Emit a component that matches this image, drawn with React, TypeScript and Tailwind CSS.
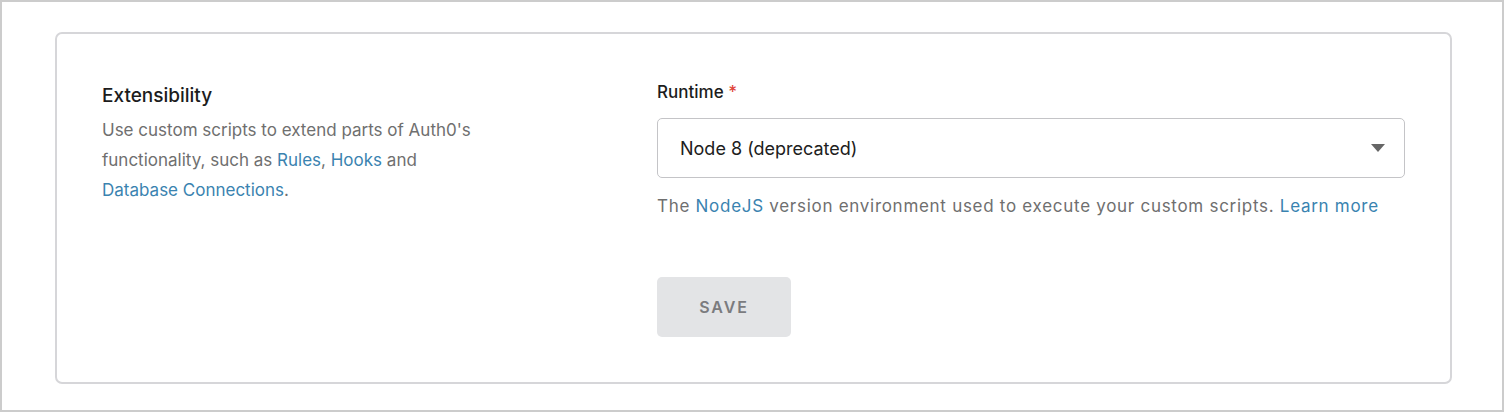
import React from "react";

const font = { fontFamily: "Inter, 'Noto Sans', sans-serif" };

export default function App() {
  return (
    <div
      className="w-[1504px] h-[412px] border-2 border-[#cccccc] bg-white pt-[30px] pl-[53px]"
      style={font}
    >
      <div className="w-[1397px] h-[352px] rounded-[7px] border-2 border-[#d6d6d9] pt-[49px] pl-[45px] flex">
        {/* Left: section description */}
        <div className="w-[555px] shrink-0">
          <h2 className="text-[19px] leading-[26px] font-medium text-[#1c1c1c]">
            Extensibility
          </h2>
          <p className="mt-[6px] text-[17px] leading-[30px] text-[#6f6f6f] w-[385px]">
            Use custom scripts to extend parts of Auth0's functionality, such as{" "}
            <a className="text-[#3a83b0]">Rules</a>,{" "}
            <a className="text-[#3a83b0]">Hooks</a> and{" "}
            <a className="text-[#3a83b0]">Database Connections</a>.
          </p>
        </div>

        {/* Right: runtime field */}
        <div className="w-[748px]">
          <label className="block text-[17px] leading-[18px] font-medium text-[#1c1c1c]">
            Runtime <span className="text-[#e0463c]">*</span>
          </label>
          <div className="mt-[17px] h-[60px] rounded-[5px] border border-[#c4c4c7] flex items-center justify-between pl-[22px] pr-[19px]">
            <span className="text-[18px] text-[#202020]">Node 8 (deprecated)</span>
            <svg width="14" height="8" viewBox="0 0 14 8">
              <path d="M0 0h14L7 8z" fill="#666" />
            </svg>
          </div>
          <p className="mt-[14px] text-[17px] leading-[28px] tracking-[0.042em] text-[#6f6f6f]">
            The <a className="text-[#3a83b0]">NodeJS</a> version environment used to
            execute your custom scripts.{" "}
            <a className="text-[#3a83b0]">Learn more</a>
          </p>
          <button className="mt-[57px] w-[134px] h-[60px] rounded-[5px] bg-[#e3e4e6] text-[16px] font-semibold tracking-[0.12em] text-[#7b7b7e]">
            SAVE
          </button>
        </div>
      </div>
    </div>
  );
}
